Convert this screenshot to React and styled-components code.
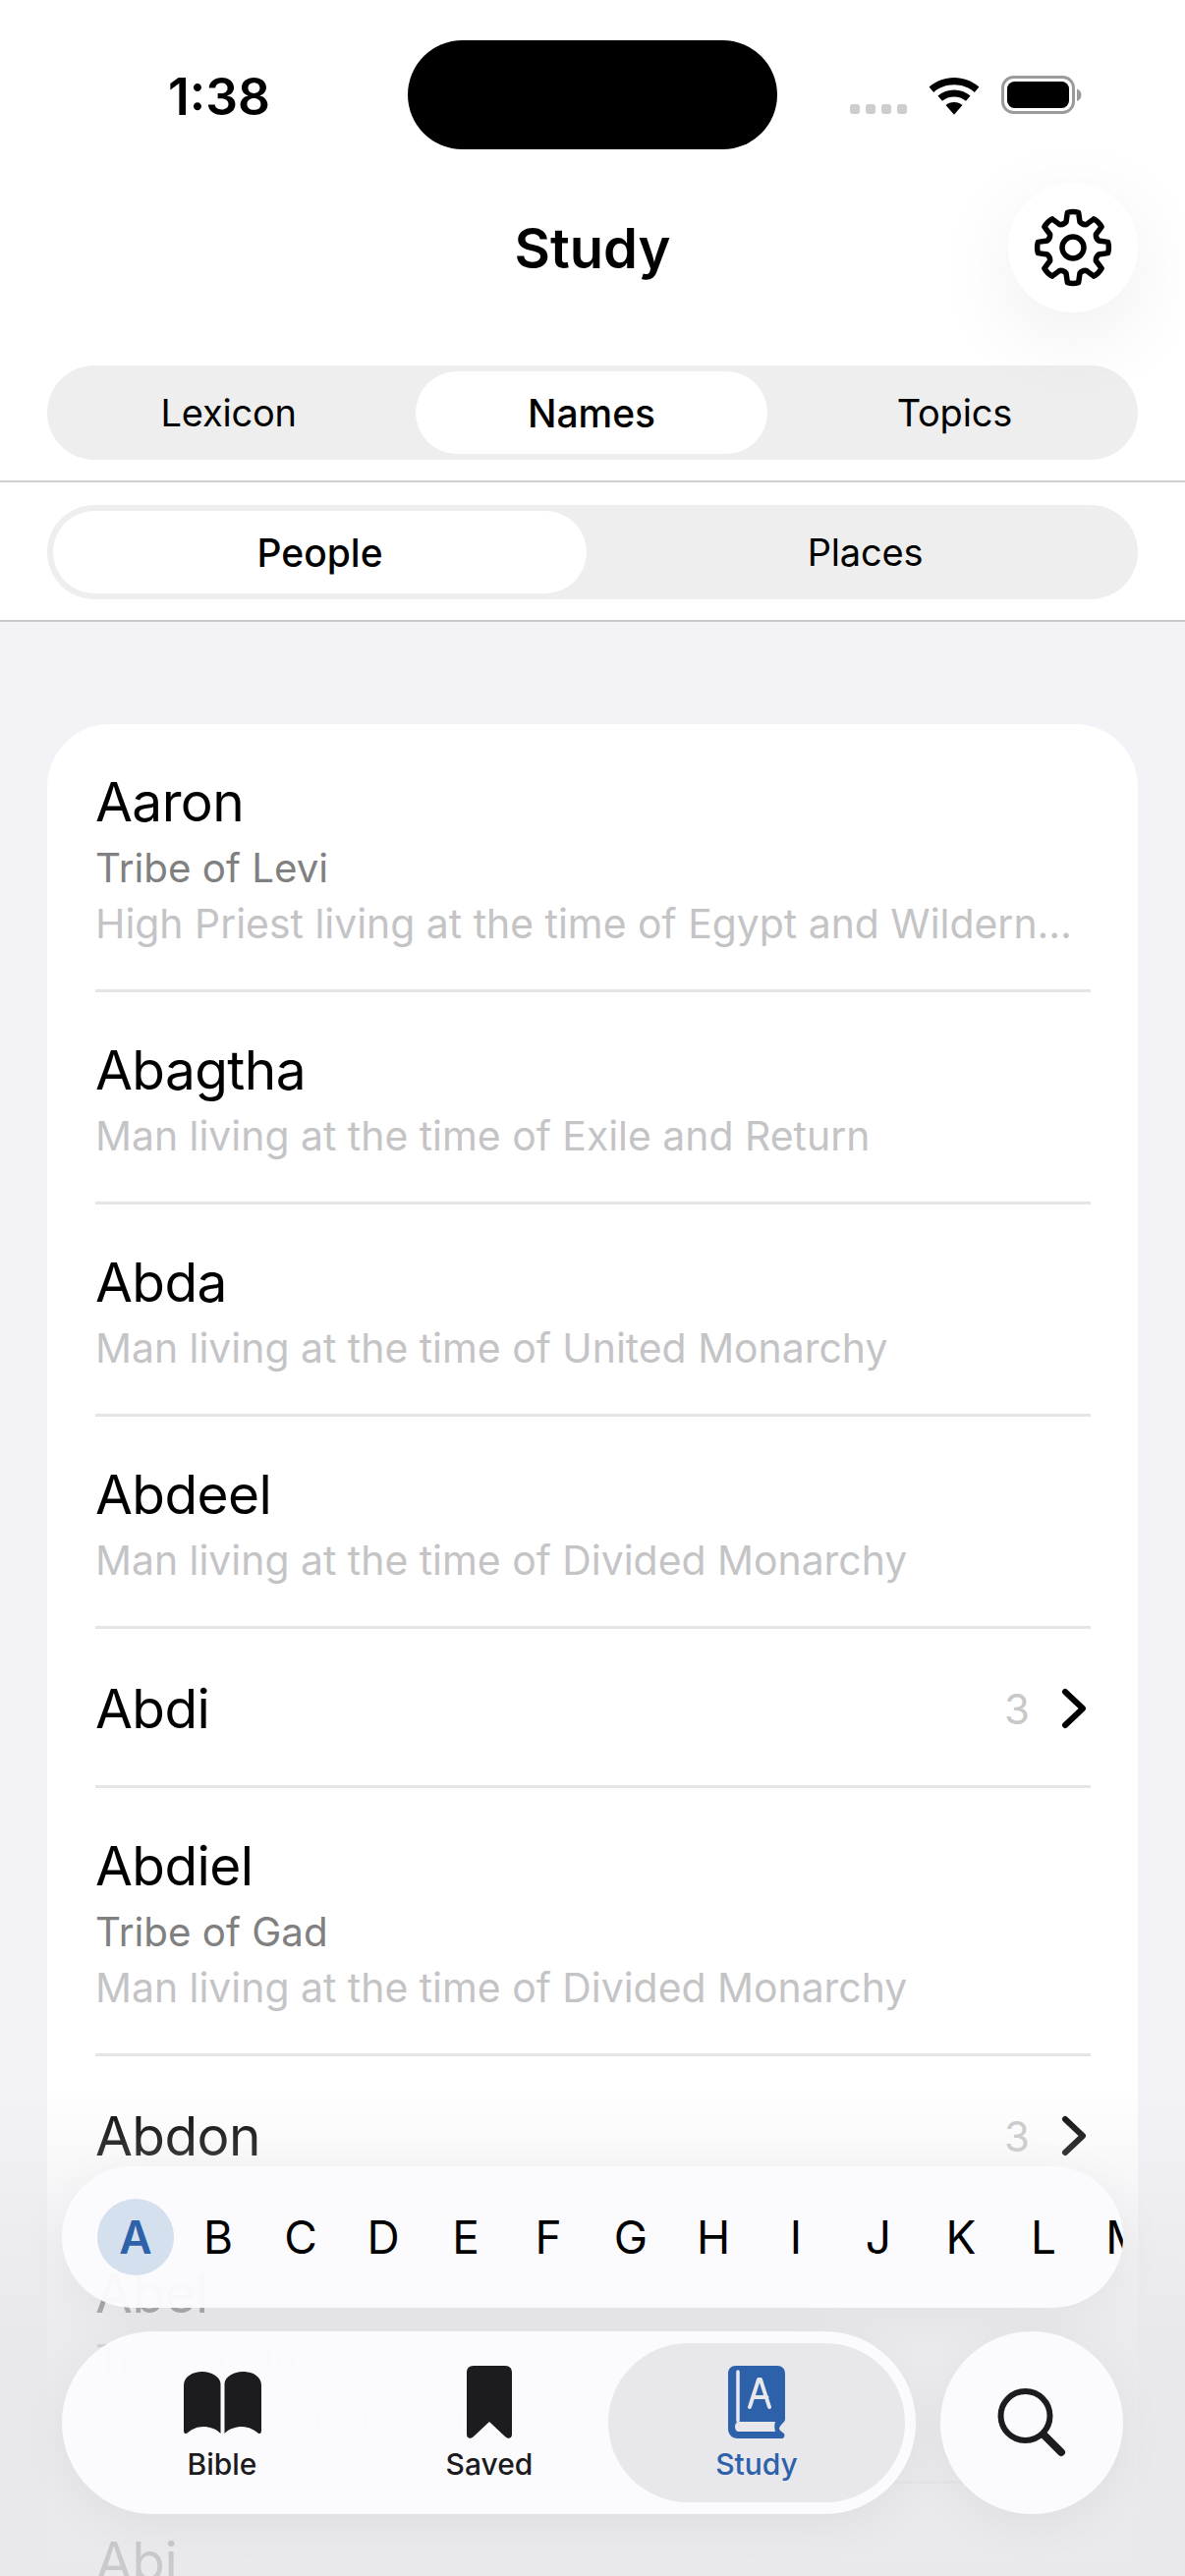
import styled, { createGlobalStyle } from "styled-components";
import { Fragment } from "react";

const GlobalStyle = createGlobalStyle`
  html, body {
    margin: 0;
    padding: 0;
    background: #f2f2f7;
  }
  * {
    box-sizing: border-box;
  }
`;

const people = [
  { name: "Aaron", tribe: "Tribe of Levi", desc: "High Priest living at the time of Egypt and Wilderness Wanderings" },
  { name: "Abagtha", desc: "Man living at the time of Exile and Return" },
  { name: "Abda", desc: "Man living at the time of United Monarchy" },
  { name: "Abdeel", desc: "Man living at the time of Divided Monarchy" },
  { name: "Abdi", count: 3 },
  { name: "Abdiel", tribe: "Tribe of Gad", desc: "Man living at the time of Divided Monarchy" },
  { name: "Abdon", count: 3 },
  { name: "Abel", tribe: "Tribe of Judah", desc: "Man living at the time of the Patriarchs" },
  { name: "Abi", desc: "Woman living at the time of Divided Monarchy" },
];

const letters = "ABCDEFGHIJKLMNOPQ".split("");

// eight teeth, concave valleys between them
function gearPath() {
  const pt = (r, deg) => {
    const a = ((deg - 90) * Math.PI) / 180;
    return `${(40 + r * Math.cos(a)).toFixed(2)} ${(40 + r * Math.sin(a)).toFixed(2)}`;
  };
  let d = "";
  for (let k = 0; k < 8; k++) {
    const c = k * 45;
    d += `${k === 0 ? "M" : "L"}${pt(27, c - 15)} `;
    d += `L${pt(36, c - 9)} Q${pt(37.2, c)} ${pt(36, c + 9)} L${pt(27, c + 15)} `;
    d += `Q${pt(25, c + 22.5)} ${pt(27, c + 30)} `;
  }
  return d + "Z";
}

export default function App() {
  return (
    <Screen>
      <GlobalStyle />
      <TopPanel>
        <StatusBar>
          <Time>1:38</Time>
          <Island />
          <StatusIcons>
            <Signal>
              <i />
              <i />
              <i />
              <i />
            </Signal>
            <WifiIcon />
            <BatteryIcon />
          </StatusIcons>
        </StatusBar>
        <Header>
          <Title>Study</Title>
          <SettingsButton>
            <GearIcon />
          </SettingsButton>
        </Header>
        <SegmentRow>
          <Segments $trim>
            <Segment>Lexicon</Segment>
            <Segment $active>Names</Segment>
            <Segment>Topics</Segment>
          </Segments>
        </SegmentRow>
        <SegmentRow>
          <Segments>
            <Segment $active>People</Segment>
            <Segment>Places</Segment>
          </Segments>
        </SegmentRow>
      </TopPanel>

      <Card>
        {people.map((p, i) => (
          <Fragment key={p.name}>
            <Row $compact={!!p.count}>
              <RowText>
                <Name>{p.name}</Name>
                {p.tribe && <Tribe>{p.tribe}</Tribe>}
                {p.desc && <Desc>{p.desc}</Desc>}
              </RowText>
              {p.count && (
                <RowEnd>
                  <Count>{p.count}</Count>
                  <Chevron />
                </RowEnd>
              )}
            </Row>
            {i < people.length - 1 && <Divider />}
          </Fragment>
        ))}
      </Card>

      <Fade />

      <Dock>
        <AlphaBar>
          {letters.map((l, i) => (
            <Letter key={l} $active={i === 0}>
              {l}
            </Letter>
          ))}
        </AlphaBar>
        <TabRow>
          <TabBar>
            <Tab>
              <TabIcon>
                <BibleIcon />
              </TabIcon>
              <TabLabel>Bible</TabLabel>
            </Tab>
            <Tab>
              <TabIcon>
                <SavedIcon />
              </TabIcon>
              <TabLabel>Saved</TabLabel>
            </Tab>
            <Tab $active>
              <TabIcon>
                <StudyIcon />
              </TabIcon>
              <TabLabel>Study</TabLabel>
            </Tab>
          </TabBar>
          <SearchButton>
            <SearchIcon />
          </SearchButton>
        </TabRow>
      </Dock>
    </Screen>
  );
}

function WifiIcon() {
  return (
    <svg width="52" height="38" viewBox="0 0 52 38">
      <path d="M26 0C16.400 0 7.700 3.500 .6 9.500l4.600 5.400C11.100 10 18.200 7.300 26 7.300s14.900 2.700 20.800 7.600l4.600-5.400C44.300 3.500 35.600 0 26 0z" />
      <path d="M26 12.500c-6.300 0-12 2.200-16.600 6l4.600 5.300c3.400-2.700 7.500-4.200 12-4.200s8.600 1.500 12 4.200l4.600-5.300c-4.600-3.800-10.300-6-16.600-6z" />
      <path d="M26 25c-3.200 0-6.200 1.100-8.500 3L26 37.800 34.500 28c-2.300-1.900-5.300-3-8.500-3z" />
    </svg>
  );
}

function BatteryIcon() {
  return (
    <svg width="82" height="40" viewBox="0 0 82 40">
      <rect x="1.500" y="1.500" width="72" height="36" rx="11" fill="none" stroke="#9b9b9b" strokeWidth="3" />
      <rect x="6" y="6" width="63" height="27" rx="7.500" fill="#000" />
      <path d="M77 13.500c2.600.8 4.500 3.300 4.500 6.200s-1.900 5.400-4.500 6.200z" fill="#9b9b9b" />
    </svg>
  );
}

function GearIcon() {
  return (
    <svg width="80" height="80" viewBox="0 0 80 80" fill="none" stroke="#000" strokeWidth="5.500" strokeLinejoin="round">
      <path d={gearPath()} />
      <circle cx="40" cy="40" r="11" />
    </svg>
  );
}

function Chevron() {
  return (
    <svg width="26" height="42" viewBox="0 0 26 42" fill="none" stroke="#000" strokeWidth="6" strokeLinecap="round" strokeLinejoin="round">
      <path d="M4 4l18 17L4 38" />
    </svg>
  );
}

function BibleIcon() {
  return (
    <svg width="79" height="63" viewBox="0 0 79 63" fill="#1c1c20">
      <path d="M0 14C0 5 9 0 19 0c9 0 18 5 18.500 12v51c-4.500-5-11.500-7-17.500-7-7 0-12 3-16 6-2 2-4 1-4-2z" />
      <path d="M79 14C79 5 70 0 60 0c-9 0-18 5-18.500 12v51c4.500-5 11.500-7 17.500-7 7 0 12 3 16 6 2 2 4 1 4-2z" />
    </svg>
  );
}

function SavedIcon() {
  return (
    <svg width="46" height="74" viewBox="0 0 46 74" fill="#1c1c20">
      <path d="M7 0h32c5 0 7 3 7 7v63c0 4-4 5-7 2L23 57 7 72c-3 3-7 2-7-2V7c0-4 2-7 7-7z" />
    </svg>
  );
}

function StudyIcon() {
  return (
    <svg width="58" height="74" viewBox="0 0 58 74">
      <path d="M8 0h42c5 0 8 3 8 8v46c0 2-1 3-2 4-3 3-4 5-4 6s2 3 5 5c1 2 0 5-2 5H10C4 74 0 70 0 64V8C0 3 3 0 8 0z" fill="#2d62aa" />
      <path d="M10 6v50" stroke="#e7e7ec" strokeWidth="3.500" strokeLinecap="round" />
      <path d="M22 42l9-28h2l9 28M25.500 32h14" stroke="#e7e7ec" strokeWidth="4" strokeLinecap="round" strokeLinejoin="round" fill="none" />
      <path d="M11 57h37c-1 3-1 6 0 10H11c-2.500 0-4-2-4-5s1.500-5 4-5z" fill="#e7e7ec" />
    </svg>
  );
}

function SearchIcon() {
  return (
    <svg width="70" height="70" viewBox="0 0 70 70" fill="none" stroke="#1c1c20" strokeLinecap="round">
      <circle cx="28.500" cy="28" r="25" strokeWidth="6" />
      <path d="M47 47l18 18" strokeWidth="8" />
    </svg>
  );
}

const Screen = styled.div`
  position: relative;
  width: 1206px;
  height: 2622px;
  overflow: hidden;
  background: #f2f2f7;
  font-family: Inter, "Liberation Sans", sans-serif;
  color: #000;
`;

const TopPanel = styled.header`
  background: #fff;
  border-bottom: 2px solid #c9c9ce;
  height: 633px;
`;

const StatusBar = styled.div`
  height: 186px;
  padding-top: 41px;
  display: grid;
  grid-template-columns: 415px 376px 1fr;
  align-items: start;
`;

const Time = styled.div`
  padding-left: 171px;
  font-size: 51.500px;
  font-weight: 600;
  line-height: 114px;
`;

const Island = styled.div`
  height: 111px;
  background: #000;
  border-radius: 56px;
`;

const StatusIcons = styled.div`
  display: flex;
  align-items: flex-end;
  gap: 22px;
  padding: 36px 0 0 74px;
  height: 76px;
`;

const Signal = styled.div`
  display: flex;
  gap: 6px;
  margin-bottom: 1px;

  i {
    display: block;
    width: 10px;
    height: 10px;
    border-radius: 3px;
    background: #cdcdcd;
  }
`;

const Header = styled.div`
  position: relative;
  height: 186px;
  padding: 0 48px 54px;
  display: flex;
  align-items: center;
  justify-content: flex-end;
`;

const Title = styled.h1`
  position: absolute;
  left: 0;
  right: 0;
  top: 27px;
  margin: 0;
  text-align: center;
  font-size: 56px;
  font-weight: 600;
  line-height: 80px;
`;

const SettingsButton = styled.div`
  position: relative;
  width: 132px;
  height: 132px;
  border-radius: 50%;
  background: #fff;
  display: flex;
  align-items: center;
  justify-content: center;
  box-shadow: 0 24px 90px rgba(0, 0, 0, 0.07);
`;

const SegmentRow = styled.div`
  height: 119px;
  padding: 0 48px;
  border-bottom: 2px solid #d0d0d4;

  & + & {
    height: 140px;
    padding-top: 23px;
    border-bottom: none;
  }
`;

const Segments = styled.div`
  display: flex;
  height: 96px;
  padding: ${(p) => (p.$trim ? "6px 2px 6px 0" : "6px 0")};
  background: #eeeeee;
  border-radius: 48px;
`;

const Segment = styled.div`
  flex: 1;
  margin: 0 6px;
  display: flex;
  align-items: center;
  justify-content: center;
  border-radius: 42px;
  font-size: ${(p) => (p.$active ? "39px" : "38px")};
  font-weight: ${(p) => (p.$active ? 500 : 400)};
  letter-spacing: ${(p) => (p.$active ? "0" : "-0.2px")};
  background: ${(p) => (p.$active ? "#fff" : "transparent")};
`;

const Card = styled.main`
  margin: 104px 48px 0;
  background: #fff;
  border-radius: 64px 64px 0 0;
  padding: 0 48px 0 49px;
`;

const Row = styled.div`
  display: flex;
  align-items: center;
  padding: ${(p) => (p.$compact ? "47px 0 39px" : "45px 0 38px")};
`;

const RowText = styled.div`
  flex: 1;
  min-width: 0;
`;

const Name = styled.div`
  font-size: 55px;
  line-height: 68px;
  letter-spacing: -0.6px;
  margin-bottom: 5px;
`;

const Tribe = styled.div`
  font-size: 40.300px;
  line-height: 57px;
  color: #808080;
`;

const Desc = styled.div`
  font-size: 40.900px;
  line-height: 57px;
  color: #c4c4c6;
  white-space: nowrap;
  overflow: hidden;
  text-overflow: ellipsis;
`;

const RowEnd = styled.div`
  display: flex;
  align-items: center;
  gap: 32px;
  padding-right: 4px;
  margin-bottom: 5px;
`;

const Count = styled.span`
  font-size: 42px;
  color: #c8c8c8;
`;

const Divider = styled.div`
  height: 3px;
  background: #e5e5e5;
`;

const Fade = styled.div`
  position: absolute;
  left: 0;
  right: 0;
  bottom: 0;
  height: 500px;
  background: linear-gradient(
    to bottom,
    rgba(230, 230, 235, 0) 0%,
    rgba(230, 230, 235, 0.5) 30%,
    rgba(230, 230, 235, 0.8) 50%,
    rgba(230, 230, 235, 0.88) 100%
  );
`;

const Dock = styled.div`
  position: absolute;
  left: 63px;
  right: 63px;
  top: 2205px;
  display: flex;
  flex-direction: column;
  gap: 24px;
`;

const AlphaBar = styled.div`
  height: 144px;
  border-radius: 72px;
  padding-left: 36px;
  display: flex;
  align-items: center;
  gap: 6px;
  overflow: hidden;
  background: rgba(251, 251, 254, 0.97);
  box-shadow: 0 10px 50px rgba(0, 0, 0, 0.05);
`;

const Letter = styled.div`
  flex: none;
  width: 78px;
  height: 78px;
  border-radius: 50%;
  display: flex;
  align-items: center;
  justify-content: center;
  font-size: 46px;
  font-weight: ${(p) => (p.$active ? 600 : 400)};
  color: ${(p) => (p.$active ? "#2d62aa" : "#000")};
  background: ${(p) => (p.$active ? "#d5e0ef" : "transparent")};
`;

const TabRow = styled.div`
  display: flex;
  justify-content: space-between;
`;

const TabBar = styled.nav`
  width: 869px;
  height: 186px;
  border-radius: 93px;
  padding: 12px 11px 12px 12px;
  display: grid;
  grid-template-columns: 302px 242px 302px;
  background: rgba(251, 251, 254, 0.97);
  box-shadow: 0 10px 50px rgba(0, 0, 0, 0.05);
`;

const Tab = styled.div`
  height: 162px;
  border-radius: 81px;
  padding-top: 23px;
  display: flex;
  flex-direction: column;
  align-items: center;
  color: ${(p) => (p.$active ? "#2d62aa" : "#1c1c20")};
  background: ${(p) => (p.$active ? "#e7e7ec" : "transparent")};
`;

const TabIcon = styled.div`
  height: 74px;
  margin-bottom: 8px;
  display: flex;
  align-items: center;
`;

const TabLabel = styled.div`
  font-size: 30px;
  font-weight: 500;
  line-height: 36px;
`;

const SearchButton = styled.div`
  width: 186px;
  height: 186px;
  border-radius: 50%;
  display: flex;
  align-items: center;
  justify-content: center;
  background: rgba(251, 251, 254, 0.97);
  box-shadow: 0 10px 50px rgba(0, 0, 0, 0.05);
`;
